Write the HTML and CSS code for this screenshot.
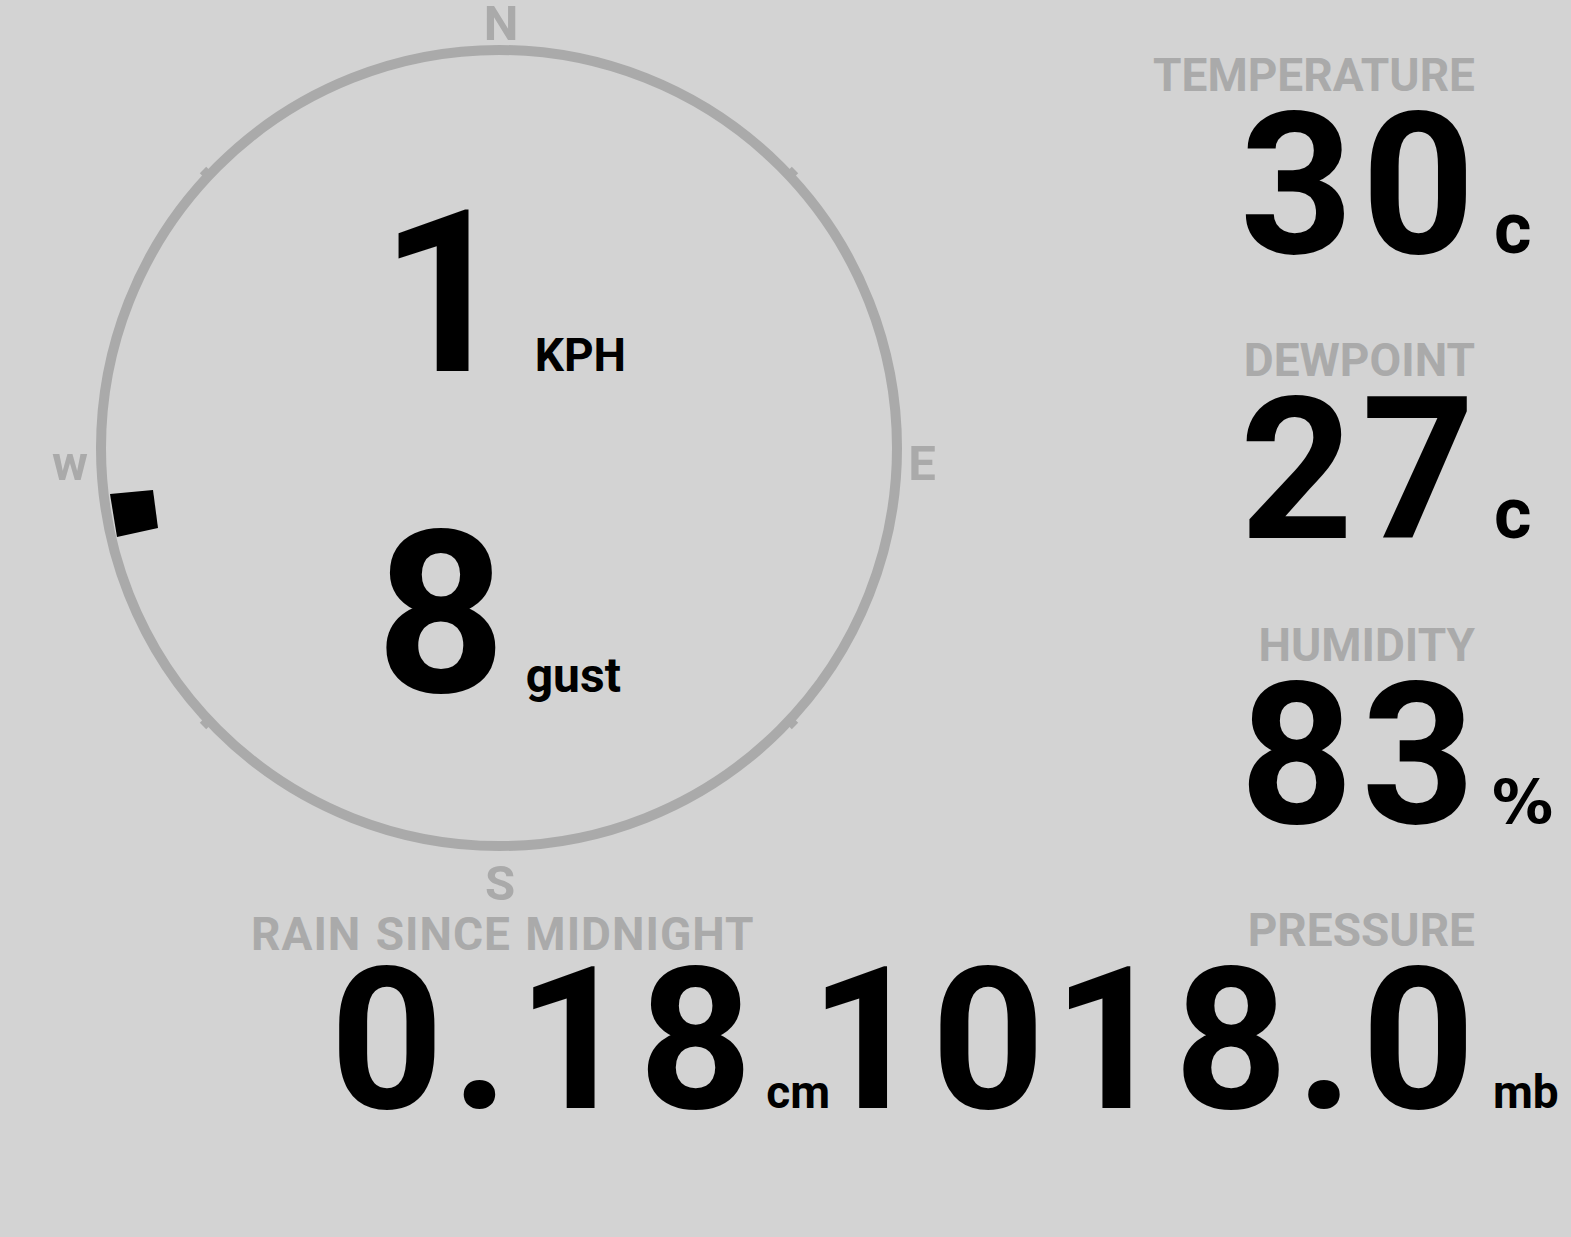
FILE: index.html
```html
<!DOCTYPE html>
<html lang="en">
<head>
<meta charset="utf-8">
<title>Weather</title>
<link rel="stylesheet" href="styles.css">
</head>
<body>
<main class="board">
  <section class="top">
    <div class="compass">
      <svg class="compass-dial" width="1000" height="907" viewBox="0 0 1000 907">
        <circle cx="499" cy="448" r="398" fill="none" stroke="#aaaaaa" stroke-width="10"/>
        <g stroke="#aaaaaa" stroke-width="9">
          <line x1="203" y1="170" x2="211" y2="178"/>
          <line x1="795" y1="170" x2="787" y2="178"/>
          <line x1="203" y1="726" x2="211" y2="718"/>
          <line x1="795" y1="726" x2="787" y2="718"/>
        </g>
        <g class="cardinal">
          <text x="501" y="40" text-anchor="middle">N</text>
          <text x="922" y="480" text-anchor="middle">E</text>
          <text x="500" y="900" text-anchor="middle">S</text>
          <text x="70" y="480" text-anchor="middle">w</text>
        </g>
        <polygon class="needle" points="110,494 153,490 158,528 117,537"/>
      </svg>
      <div class="speeds">
        <div class="speed-row speed-wind">
          <span class="speed-num">1</span>
          <span class="speed-unit">KPH</span>
        </div>
        <div class="speed-row speed-gust">
          <span class="speed-num">8</span>
          <span class="speed-unit speed-unit-lower">gust</span>
        </div>
      </div>
    </div>
    <div class="stats">
      <div class="stat">
        <div class="label">TEMPERATURE</div>
        <div class="value-row">
          <span class="value">30</span>
          <span class="unit">c</span>
        </div>
      </div>
      <div class="stat">
        <div class="label">DEWPOINT</div>
        <div class="value-row">
          <span class="value">27</span>
          <span class="unit">c</span>
        </div>
      </div>
      <div class="stat">
        <div class="label">HUMIDITY</div>
        <div class="value-row">
          <span class="value">83</span>
          <span class="unit unit-pct">%</span>
        </div>
      </div>
    </div>
  </section>
  <section class="bottom">
    <div class="rain">
      <div class="label">RAIN SINCE MIDNIGHT</div>
      <div class="value-row rain-row">
        <span class="value">0.18</span>
        <span class="unit unit-small rain-unit">cm</span>
      </div>
    </div>
    <div class="stat pressure">
      <div class="label">PRESSURE</div>
      <div class="value-row">
        <span class="value">1018.0</span>
        <span class="unit unit-small">mb</span>
      </div>
    </div>
  </section>
</main>
</body>
</html>
```
FILE: styles.css
```css
html, body {
  margin: 0;
  padding: 0;
  background: #d3d3d3;
}

body {
  font-family: Roboto, "Liberation Sans", sans-serif;
  font-weight: 700;
  color: #000;
  width: 1571px;
  height: 1237px;
  overflow: hidden;
}

.board {
  display: flex;
  flex-direction: column;
  width: 1571px;
}

.top {
  display: flex;
  height: 907px;
}

.compass {
  width: 1000px;
  height: 907px;
  display: grid;
  flex: none;
}

.compass-dial,
.speeds {
  grid-area: 1 / 1;
}

.compass-dial {
  overflow: visible;
}

.cardinal text {
  font-family: Roboto, "Liberation Sans", sans-serif;
  font-weight: 700;
  font-size: 49px;
  fill: #aaaaaa;
}

.needle {
  fill: #000;
}

.speeds {
  display: flex;
  flex-direction: column;
  padding-left: 380px;
  padding-top: 204px;
}

.speed-row {
  display: flex;
  align-items: baseline;
}

.speed-gust {
  margin-top: 140px;
  margin-left: -4px;
}

.speed-num {
  font-size: 226px;
  line-height: 0.8;
}

.speed-unit {
  font-size: 46px;
  line-height: 1;
  margin-left: 25px;
}

.speed-unit-lower {
  font-size: 48px;
  margin-left: 20px;
}

.stats {
  flex: 1;
  display: flex;
  flex-direction: column;
  padding-top: 52px;
}

.stat {
  display: flex;
  flex-direction: column;
  align-items: flex-end;
  height: 285px;
}

.label {
  font-size: 46px;
  line-height: 1;
  color: #aaaaaa;
  margin-right: 96px;
  white-space: nowrap;
}

.value-row {
  display: flex;
  align-items: baseline;
  margin-top: 8px;
}

.value {
  font-size: 198px;
  line-height: 0.8;
  letter-spacing: 8px;
  margin-right: -8px;
  white-space: nowrap;
}

.unit {
  width: 96px;
  box-sizing: border-box;
  padding-left: 19px;
  font-size: 72px;
  line-height: 1;
}

.unit-pct {
  font-family: "DejaVu Sans", sans-serif;
  font-size: 61px;
  padding-left: 17px;
}

.unit-small {
  font-size: 46px;
  padding-left: 18px;
}

.bottom {
  display: flex;
  align-items: flex-start;
}

.rain {
  display: flex;
  flex-direction: column;
  flex: none;
  padding-left: 251px;
  padding-top: 4px;
  margin-right: -80px;
}

.rain .label {
  margin-right: 0;
  letter-spacing: 1px;
  word-spacing: 2px;
}

.rain-row {
  margin-left: 79px;
  margin-top: 4px;
}

.rain-unit {
  width: auto;
  padding-left: 14px;
}

.pressure {
  margin-left: auto;
  flex: none;
}
```
